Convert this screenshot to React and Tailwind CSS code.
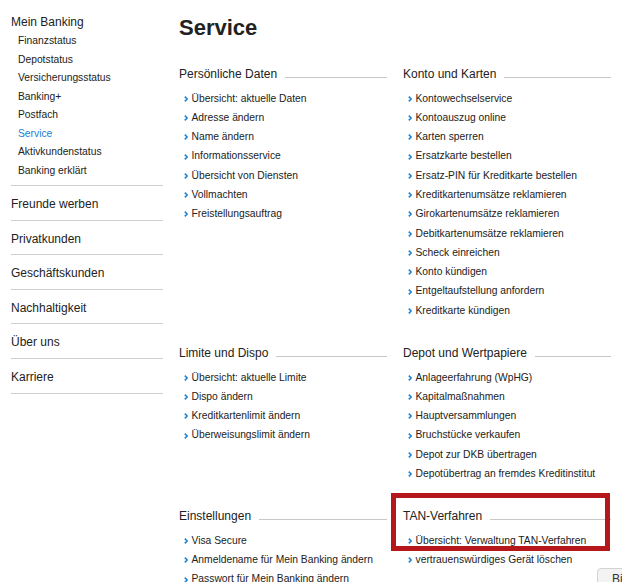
import React from "react";

const font = { fontFamily: '"Liberation Sans", Arial, Helvetica, sans-serif' };

const subNav = [
  "Finanzstatus",
  "Depotstatus",
  "Versicherungsstatus",
  "Banking+",
  "Postfach",
  "Service",
  "Aktivkundenstatus",
  "Banking erklärt",
];

const mainNav = [
  "Freunde werben",
  "Privatkunden",
  "Geschäftskunden",
  "Nachhaltigkeit",
  "Über uns",
  "Karriere",
];

const rows = [
  [
    {
      title: "Persönliche Daten",
      items: [
        "Übersicht: aktuelle Daten",
        "Adresse ändern",
        "Name ändern",
        "Informationsservice",
        "Übersicht von Diensten",
        "Vollmachten",
        "Freistellungsauftrag",
      ],
    },
    {
      title: "Konto und Karten",
      items: [
        "Kontowechselservice",
        "Kontoauszug online",
        "Karten sperren",
        "Ersatzkarte bestellen",
        "Ersatz-PIN für Kreditkarte bestellen",
        "Kreditkartenumsätze reklamieren",
        "Girokartenumsätze reklamieren",
        "Debitkartenumsätze reklamieren",
        "Scheck einreichen",
        "Konto kündigen",
        "Entgeltaufstellung anfordern",
        "Kreditkarte kündigen",
      ],
    },
  ],
  [
    {
      title: "Limite und Dispo",
      items: [
        "Übersicht: aktuelle Limite",
        "Dispo ändern",
        "Kreditkartenlimit ändern",
        "Überweisungslimit ändern",
      ],
    },
    {
      title: "Depot und Wertpapiere",
      items: [
        "Anlageerfahrung (WpHG)",
        "Kapitalmaßnahmen",
        "Hauptversammlungen",
        "Bruchstücke verkaufen",
        "Depot zur DKB übertragen",
        "Depotübertrag an fremdes Kreditinstitut",
      ],
    },
  ],
  [
    {
      title: "Einstellungen",
      items: [
        "Visa Secure",
        "Anmeldename für Mein Banking ändern",
        "Passwort für Mein Banking ändern",
        "Sicherheitsfragen ändern",
      ],
    },
    {
      title: "TAN-Verfahren",
      items: [
        "Übersicht: Verwaltung TAN-Verfahren",
        "vertrauenswürdiges Gerät löschen",
      ],
    },
  ],
];

function Arrow() {
  return (
    <svg width="4" height="6" viewBox="0 0 4 6" className="shrink-0 mt-[1px]">
      <path d="M0.8 0.6 L3.2 3 L0.8 5.4" fill="none" stroke="#1a84d6" strokeWidth="1.6" />
    </svg>
  );
}

function Section({ title, items }) {
  return (
    <div className="flex flex-col">
      <div className="flex items-center h-[14px]">
        <span className="text-[12px] leading-[14px] text-[#222] whitespace-nowrap">{title}</span>
        <div className="flex-1 h-px bg-[#c8c8c8] ml-[8px] mt-[7px]" />
      </div>
      <ul className="mt-[8px]">
        {items.map((it) => (
          <li key={it} className="flex items-center h-[19.3px] pl-[5px]">
            <Arrow />
            <span className="ml-[3.5px] text-[10.3px] leading-[19.3px] text-[#222] whitespace-nowrap">{it}</span>
          </li>
        ))}
      </ul>
    </div>
  );
}

export default function App() {
  return (
    <div className="relative h-[582px] w-full overflow-hidden bg-white" style={font}>
      <div className="flex pl-[11px]">
        <aside className="w-[152px] shrink-0 pt-[15px]">
          <div className="text-[12px] leading-[14px] text-[#222]">Mein Banking</div>
          <ul className="mt-[3px] pl-[7px] mb-[5px]">
            {subNav.map((s) => (
              <li
                key={s}
                className={`text-[10.3px] leading-[18.5px] ${s === "Service" ? "text-[#1a7fd4]" : "text-[#222]"}`}
              >
                {s}
              </li>
            ))}
          </ul>
          <ul>
            {mainNav.map((m, i) => (
              <li
                key={m}
                className={`border-t border-[#cfcfcf] pt-[11px] pb-[8.6px] text-[12px] leading-[14px] text-[#222] ${
                  i === mainNav.length - 1 ? "border-b" : ""
                }`}
              >
                {m}
              </li>
            ))}
          </ul>
        </aside>
        <main className="ml-[16px] w-[432px] pt-[15px]">
          <h1 className="text-[22px] leading-[26px] font-bold text-[#222]">Service</h1>
          <div className="mt-[25.5px] grid grid-cols-2 gap-x-[16px] gap-y-[25.5px]">
            {rows.flat().map((sec) => (
              <Section key={sec.title} {...sec} />
            ))}
          </div>
        </main>
      </div>

      <div className="absolute left-[391px] top-[493px] w-[219px] h-[58px] border-[5px] border-[#b5171a]" />

      <div className="absolute left-[597px] top-[568px] h-[30px] pl-[14px] pr-[10px] pt-[3px] bg-[#f3f3f3] border border-[#d2d2d2] rounded-tl-[4px] text-[12px] leading-[14px] text-[#333] whitespace-nowrap">
        Bitte bewerten
      </div>
    </div>
  );
}
